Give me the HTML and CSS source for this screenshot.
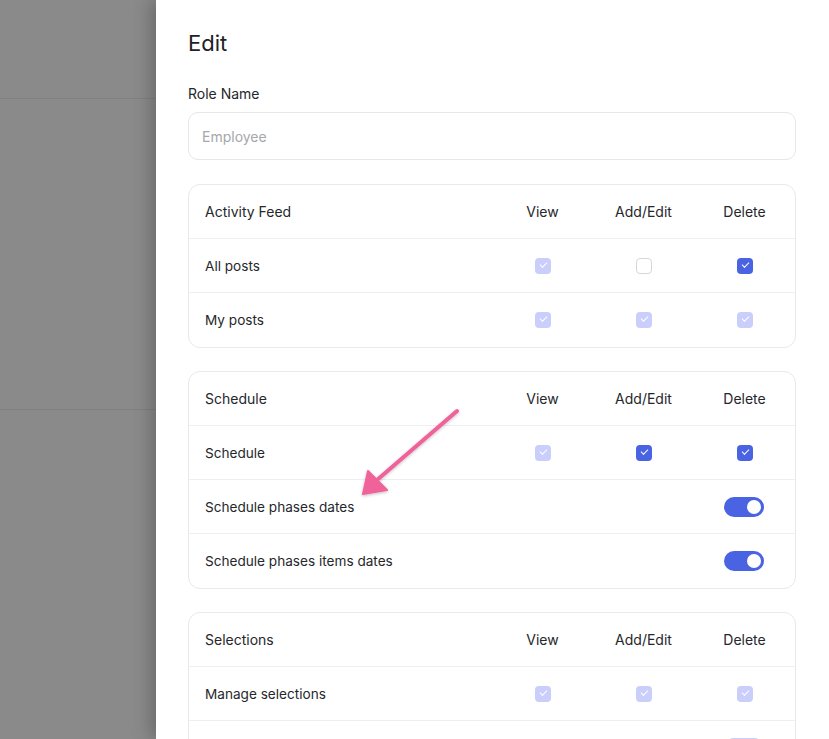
FILE: index.html
```html
<!DOCTYPE html>
<html lang="en">
<head>
<meta charset="utf-8">
<title>Edit Role</title>
<link rel="stylesheet" href="styles.css">
</head>
<body>
<div class="screen">
  <div class="backdrop">
    <div class="bd-top"></div>
    <div class="bd-mid"></div>
    <div class="bd-rest"></div>
  </div>
  <aside class="panel">
    <h1 class="title">Edit</h1>
    <label class="label" for="role">Role Name</label>
    <input class="input" id="role" type="text" placeholder="Employee">

    <section class="card">
      <div class="row head"><span class="name">Activity Feed</span><span class="col">View</span><span class="col">Add/Edit</span><span class="col">Delete</span></div>
      <div class="row"><span class="name">All posts</span><span class="col"><i class="cb dis"></i></span><span class="col"><i class="cb off"></i></span><span class="col"><i class="cb on"></i></span></div>
      <div class="row"><span class="name">My posts</span><span class="col"><i class="cb dis"></i></span><span class="col"><i class="cb dis"></i></span><span class="col"><i class="cb dis"></i></span></div>
    </section>

    <section class="card">
      <div class="row head"><span class="name">Schedule</span><span class="col">View</span><span class="col">Add/Edit</span><span class="col">Delete</span></div>
      <div class="row"><span class="name">Schedule</span><span class="col"><i class="cb dis"></i></span><span class="col"><i class="cb on"></i></span><span class="col"><i class="cb on"></i></span></div>
      <div class="row"><span class="name">Schedule phases dates</span><span class="col"></span><span class="col"></span><span class="col"><i class="tg"></i></span></div>
      <div class="row"><span class="name">Schedule phases items dates</span><span class="col"></span><span class="col"></span><span class="col"><i class="tg"></i></span></div>
    </section>

    <section class="card">
      <div class="row head"><span class="name">Selections</span><span class="col">View</span><span class="col">Add/Edit</span><span class="col">Delete</span></div>
      <div class="row"><span class="name">Manage selections</span><span class="col"><i class="cb dis"></i></span><span class="col"><i class="cb dis"></i></span><span class="col"><i class="cb dis"></i></span></div>
      <div class="row"><span class="name"></span><span class="col"></span><span class="col"></span><span class="col"><i class="tg tg-dis"></i></span></div>
    </section>
  </aside>
</div>
<svg class="annot" width="829" height="739" viewBox="0 0 829 739" aria-hidden="true">
  <defs>
    <filter id="sh" x="-20%" y="-20%" width="140%" height="140%">
      <feDropShadow dx="0" dy="1" stdDeviation="1.5" flood-color="#000" flood-opacity="0.25"/>
    </filter>
  </defs>
  <g filter="url(#sh)" fill="#f0639a" stroke="#f0639a">
    <line x1="457" y1="411" x2="377" y2="480" stroke-width="4" stroke-linecap="round"/>
    <polygon points="363,494 368,471 387,490" stroke-width="2" stroke-linejoin="round"/>
  </g>
</svg>
</body>
</html>
```
FILE: styles.css
```css
* { box-sizing: border-box; }
html, body { margin: 0; padding: 0; }
body {
  width: 829px;
  height: 739px;
  overflow: hidden;
  font-family: Inter, "Noto Sans", "Liberation Sans", sans-serif;
  color: #1f2126;
  position: relative;
}
.screen {
  display: flex;
  height: 739px;
}
.backdrop {
  width: 156px;
  flex: none;
  background: #8a8a8a;
  display: flex;
  flex-direction: column;
}
.bd-top { height: 99px; border-bottom: 1px solid #808080; }
.bd-mid { height: 311px; border-bottom: 1px solid #808080; }
.bd-rest { flex: 1; }
.panel {
  flex: 1;
  background: #fff;
  padding: 29px 33px 0 32px;
  box-shadow: -6px 0 16px rgba(0, 0, 0, 0.22);
  overflow: hidden;
  display: flex;
  flex-direction: column;
}
.title {
  margin: 0 0 27px;
  font-size: 22px;
  line-height: 28px;
  font-weight: 400;
  color: #1f2126;
  flex: none;
}
.label {
  display: block;
  font-size: 14px;
  line-height: 20px;
  margin-bottom: 8px;
  color: #25272b;
  flex: none;
}
.input {
  display: block;
  flex: none;
  width: 100%;
  height: 48px;
  border: 1px solid #e6e7ea;
  border-radius: 10px;
  padding: 0 13px;
  font: inherit;
  font-size: 14px;
  color: #1f2126;
  outline: none;
  margin-bottom: 24px;
}
.input::placeholder { color: #a5a7ab; }
.card {
  border: 1px solid #e8e9ec;
  border-radius: 12px;
  margin-bottom: 23px;
  flex: none;
}
.row {
  display: grid;
  grid-template-columns: 1fr 101px 101px 101px;
  align-items: center;
  height: 54px;
  border-bottom: 1px solid #eceef0;
  font-size: 14px;
  color: #25272b;
}
.row:last-child { border-bottom: none; }
.name { padding-left: 16px; font-size: 13.6px; }
.head .name { font-size: 14px; }
.col {
  display: flex;
  justify-content: center;
  align-items: center;
}
.cb {
  width: 16px;
  height: 16px;
  border-radius: 4px;
  display: block;
  position: relative;
}
.cb.on { background: #4a63e3; }
.cb.dis { background: #c9cffa; }
.cb.off { background: #fff; border: 1px solid #d5d7db; }
.cb.on::after, .cb.dis::after {
  content: "";
  position: absolute;
  left: 5px;
  top: 4px;
  width: 6px;
  height: 3px;
  border-left: 1px solid #fff;
  border-bottom: 1px solid #fff;
  transform: rotate(-45deg);
}
.tg {
  display: block;
  width: 40px;
  height: 20px;
  border-radius: 10px;
  background: #4a63e3;
  position: relative;
  margin-left: -2px;
}
.tg::after {
  content: "";
  position: absolute;
  right: 3px;
  top: 3px;
  width: 14px;
  height: 14px;
  border-radius: 50%;
  background: #fff;
}
.tg.tg-dis { background: #c9cffa; }
.annot {
  position: absolute;
  left: 0;
  top: 0;
  pointer-events: none;
}
```
